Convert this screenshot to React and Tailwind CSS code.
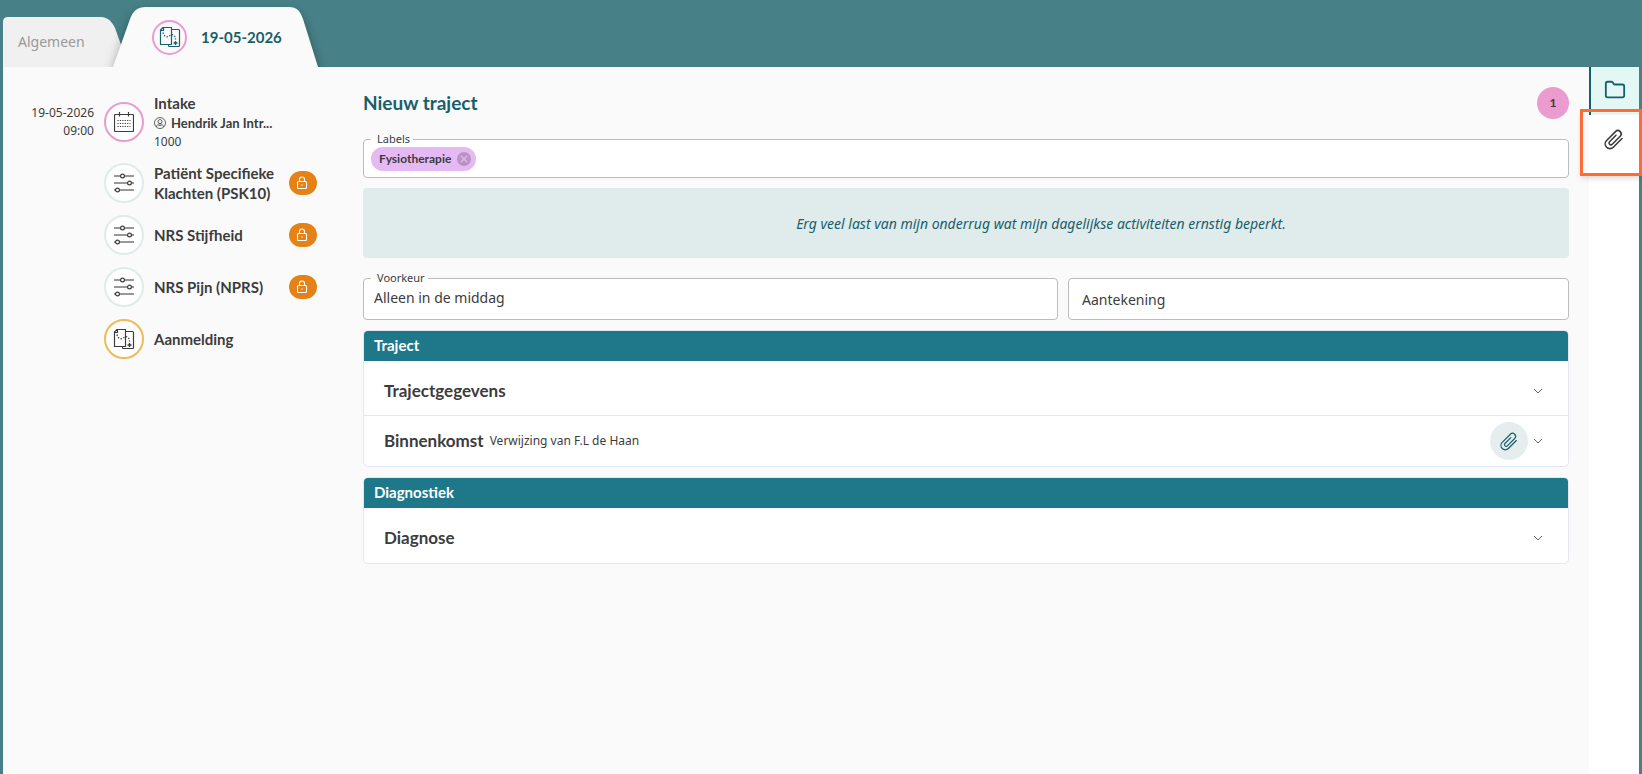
import React from "react";
import { Folder } from "lucide-react";

const heading = "font-['Lato','Noto_Sans',sans-serif] font-bold";

const RouteIcon = ({ className }) => (
  <svg viewBox="0 0 22 22" className={className} fill="none" stroke="currentColor" aria-hidden="true">
    <path d="M4 1.5H12.5V18.5H1.5V4L4 1.5ZM4.500 1.500V4.500H1.500" strokeWidth="1.2" strokeLinejoin="round" />
    <path d="M12.5 3.5H19.5a1 1 0 0 1 1 1V19.500a1 1 0 0 1-1 1H10.500a1 1 0 0 1-1-1V18.500" strokeWidth="1.2" />
    <path d="M4 6.500C5 11.500 9 11.500 11 9.500S16.500 9 16.500 13.500" strokeWidth="1.300" strokeDasharray="1.300 1.600" />
    <path d="M16.500 15v4M14.500 17h4" strokeWidth="1.400" />
  </svg>
);

const CalendarIcon = () => (
  <svg viewBox="0 0 20 20" className="size-5" fill="none" stroke="currentColor" aria-hidden="true">
    <rect x="0.500" y="2.500" width="19" height="17" rx="1" strokeWidth="1.200" />
    <path d="M5.500 0V4.500M14.500 0V4.500" strokeWidth="1.200" />
    <path d="M3.500 8.500h13M3.500 11.500h13M3.500 14.500h13" strokeDasharray="1.200 1.200" />
  </svg>
);

const SlidersIcon = () => (
  <svg viewBox="0 0 20 20" className="size-5" fill="none" stroke="currentColor" aria-hidden="true">
    <path d="M0 3H6.500M10.500 3H20M0 10H13.500M17.500 10H20M0 17H1.500M5.500 17H20" stroke="#777" strokeWidth="1.300" />
    <circle cx="8.500" cy="3" r="1.900" strokeWidth="1.200" />
    <circle cx="15.500" cy="10" r="1.900" strokeWidth="1.200" />
    <circle cx="3.500" cy="17" r="1.900" strokeWidth="1.200" />
  </svg>
);

const PersonIcon = () => (
  <svg viewBox="0 0 12 12" className="size-3 shrink-0" fill="none" stroke="currentColor" strokeWidth="0.800" aria-hidden="true">
    <circle cx="6" cy="6" r="5.500" />
    <circle cx="6" cy="4.500" r="2" />
    <path d="M2.500 10C2.500 5.800 9.500 5.800 9.500 10M4.500 8.500h3" />
  </svg>
);

const ClipIcon = ({ className, strokeWidth }) => (
  <svg
    viewBox="0 0 24 24"
    className={className}
    fill="none"
    stroke="currentColor"
    strokeWidth={strokeWidth}
    strokeLinecap="round"
    strokeLinejoin="round"
    aria-hidden="true"
  >
    <path d="m20 11.500-8.700 8.700a4.700 4.700 0 0 1-6.700-6.700l8.900-8.900A3.300 3.300 0 0 1 18.200 9.300L10.200 17.300a1.800 1.800 0 0 1-2.600-2.600L14 8.300" />
  </svg>
);

const ChevronIcon = () => (
  <svg viewBox="0 0 20 20" className="size-5" fill="none" stroke="#666" strokeWidth="1" aria-hidden="true">
    <path d="M6 8L10 12L14 8" />
  </svg>
);

const LockBadge = () => (
  <span className="flex h-6 w-7 shrink-0 items-center justify-center rounded-full bg-[#e48217] text-white">
    <svg viewBox="0 0 12 14" className="h-3.5 w-3" fill="none" stroke="currentColor" strokeWidth="1.100" aria-hidden="true">
      <rect x="0.500" y="5.500" width="9" height="7" rx="1" />
      <path d="M2.500 5.500V3.500a2.500 2.500 0 0 1 5 0V5.500M4.300 9h1.400" />
    </svg>
  </span>
);

const forms = [
  { title: "Patiënt Specifieke Klachten (PSK10)", icon: <SlidersIcon />, ring: "border-[#e0ebec]", locked: true },
  { title: "NRS Stijfheid", icon: <SlidersIcon />, ring: "border-[#e0ebec]", locked: true },
  { title: "NRS Pijn (NPRS)", icon: <SlidersIcon />, ring: "border-[#e0ebec]", locked: true },
  { title: "Aanmelding", icon: <RouteIcon className="size-[22px]" />, ring: "border-[#efba58]", locked: false },
];

const Timeline = () => (
  <aside className="w-[360px] shrink-0 pl-5 pr-[46px] pt-[26px]">
    <ul className="flex flex-col gap-3">
      <li className="flex items-center gap-2.5">
        <p className="w-[71px] text-right text-xs leading-[18px]">
          19-05-2026
          <br />
          09:00
        </p>
        <span className="flex size-10 shrink-0 items-center justify-center rounded-full border-2 border-[#eb9bcd] bg-white">
          <CalendarIcon />
        </span>
        <div className="min-w-0 flex-1">
          <h3 className={`${heading} text-[15px] leading-5`}>Intake</h3>
          <p className={`${heading} flex items-center gap-[5px] text-[13px] leading-5`}>
            <PersonIcon />
            <span>Hendrik Jan Intr...</span>
          </p>
          <p className="text-xs leading-[18px]">1000</p>
        </div>
      </li>
      {forms.map((form) => (
        <li key={form.title} className="flex items-center gap-2.5 pl-[81px]">
          <span className={`flex size-10 shrink-0 items-center justify-center rounded-full border-2 bg-white ${form.ring}`}>
            {form.icon}
          </span>
          <h3 className={`${heading} flex-1 text-[15px] leading-5`}>{form.title}</h3>
          {form.locked && <LockBadge />}
        </li>
      ))}
    </ul>
  </aside>
);

const Panel = ({ title, children }) => (
  <section className="overflow-hidden rounded-[5px] border border-[#e6e6f2] bg-white">
    <h2 className={`${heading} h-[30px] bg-[#1e788a] px-2.5 text-[15px] leading-7 text-white`}>{title}</h2>
    <div className="divide-y divide-[#e6e6f2]">{children}</div>
  </section>
);

const PanelRow = ({ title, note, attachment, tall }) => (
  <div className={`flex items-center px-5 ${tall ? "h-[55px] pt-[5px]" : "h-[50px]"}`}>
    <h3 className={`${heading} text-[17px]`}>{title}</h3>
    {note && <p className="ml-1.5 text-xs">{note}</p>}
    <div className="ml-auto flex items-center">
      {attachment && (
        <button aria-label="Bijlage" className="flex size-[38px] items-center justify-center rounded-full bg-[#e5edee] text-[#17606b]">
          <ClipIcon className="size-[22px]" strokeWidth={1.3} />
        </button>
      )}
      <button aria-label={`${title} openen`}>
        <ChevronIcon />
      </button>
    </div>
  </div>
);

const App = () => {
  return (
    <div className="flex min-h-screen flex-col bg-[#478087] px-[3px] font-['Noto_Sans',sans-serif] text-[#3c3c3c]">
      <nav className="flex h-[67px] items-end overflow-hidden">
        <a href="#algemeen" className="relative flex h-[50px] w-[110px] items-center pl-[15px] text-sm text-[#999]">
          <svg viewBox="0 0 126 50" className="absolute left-0 top-0 h-[50px] w-[126px]" aria-hidden="true">
            <path d="M0 50V5Q0 0 5 0H98C105 0 109 5 112 11L126 50Z" fill="#f0f0f0" />
          </svg>
          <span className="relative">Algemeen</span>
        </a>
        <a href="#traject" className="relative flex h-[60px] w-[205px] items-center gap-3.5 pl-[39px] text-[#17606b]">
          <svg viewBox="0 0 205 60" className="absolute left-0 top-0 h-[60px] w-[205px] drop-shadow-[0_6px_6px_rgba(0,0,0,0.4)]" aria-hidden="true">
            <path d="M0 60L17 12C20 4 24 0 33 0H176C184 0 187 4 190 12L205 60Z" fill="#fafafa" />
          </svg>
          <span className="relative flex size-[35px] items-center justify-center rounded-full border-2 border-[#eb9bcd]">
            <RouteIcon className="size-[22px]" />
          </span>
          <span className={`${heading} relative text-[15px]`}>19-05-2026</span>
        </a>
      </nav>

      <div className="relative flex flex-1 bg-[#fafafa]">
        <Timeline />

        <main className="flex min-w-0 flex-1 flex-col pr-5 pt-5">
          <header className="flex items-center justify-between">
            <h1 className={`${heading} text-[19px] text-[#17606b]`}>Nieuw traject</h1>
            <span className={`${heading} flex size-8 items-center justify-center rounded-full bg-[#eb9bcd] text-xs`}>1</span>
          </header>

          <fieldset className="mt-[13px] h-[46px] rounded border border-[#bcbcbc] bg-white px-[7px]">
            <legend className="pl-1.5 pr-[3px] text-[11px] leading-[14px]">Labels</legend>
            <div className="flex pt-px">
              <span className={`${heading} flex h-6 items-center gap-1.5 rounded-full bg-[#e5b9f3] pl-2 pr-[5px] text-xs`}>
                Fysiotherapie
                <button aria-label="Fysiotherapie verwijderen" className="flex size-3.5 items-center justify-center rounded-full bg-[#b894c3] text-[#e5b9f3]">
                  <svg viewBox="0 0 14 14" className="size-3.5" stroke="currentColor" strokeWidth="1.200" aria-hidden="true">
                    <path d="M4 4L10 10M10 4L4 10" />
                  </svg>
                </button>
              </span>
            </div>
          </fieldset>

          <p className="mt-2.5 flex h-[70px] items-center justify-center rounded-sm bg-[#e0ebec] pl-[150px] pt-0.5 text-sm italic text-[#17606b]">
            Erg veel last van mijn onderrug wat mijn dagelijkse activiteiten ernstig beperkt.
          </p>

          <div className="mt-[13px] grid grid-cols-[695fr_501fr] items-end gap-2.5">
            <fieldset className="h-[49px] min-w-0 rounded border border-[#bcbcbc] bg-white px-[7px]">
              <legend className="pl-1.5 pr-[3px] text-[11px] leading-[14px]">
                <label htmlFor="voorkeur">Voorkeur</label>
              </legend>
              <input id="voorkeur" defaultValue="Alleen in de middag" className="w-full px-[3px] pt-0.5 text-sm outline-none" />
            </fieldset>
            <input
              aria-label="Aantekening"
              placeholder="Aantekening"
              className="h-[42px] min-w-0 rounded border border-[#bcbcbc] bg-white px-[13px] text-sm outline-none placeholder:text-[#3c3c3c]"
            />
          </div>

          <div className="mt-2.5 flex flex-col gap-2.5">
            <Panel title="Traject">
              <PanelRow title="Trajectgegevens" tall />
              <PanelRow title="Binnenkomst" note="Verwijzing van F.L de Haan" attachment />
            </Panel>
            <Panel title="Diagnostiek">
              <PanelRow title="Diagnose" tall />
            </Panel>
          </div>
        </main>

        <aside className="flex w-[50px] flex-col bg-white">
          <button aria-label="Map" className="flex h-12 items-center justify-center border-l-2 border-[#17606b] bg-[#e3f8f4] pb-0.5 text-[#17606b]">
            <Folder className="size-[22px]" />
          </button>
          <button aria-label="Bijlagen" className="flex h-12 items-center justify-center">
            <ClipIcon className="size-6" strokeWidth={1.6} />
          </button>
        </aside>
        <div className="pointer-events-none absolute -right-[3px] top-[42px] h-[67px] w-[62px] border-3 border-[#ff6b35] shadow-md" />
      </div>
    </div>
  );
};

export default App;
